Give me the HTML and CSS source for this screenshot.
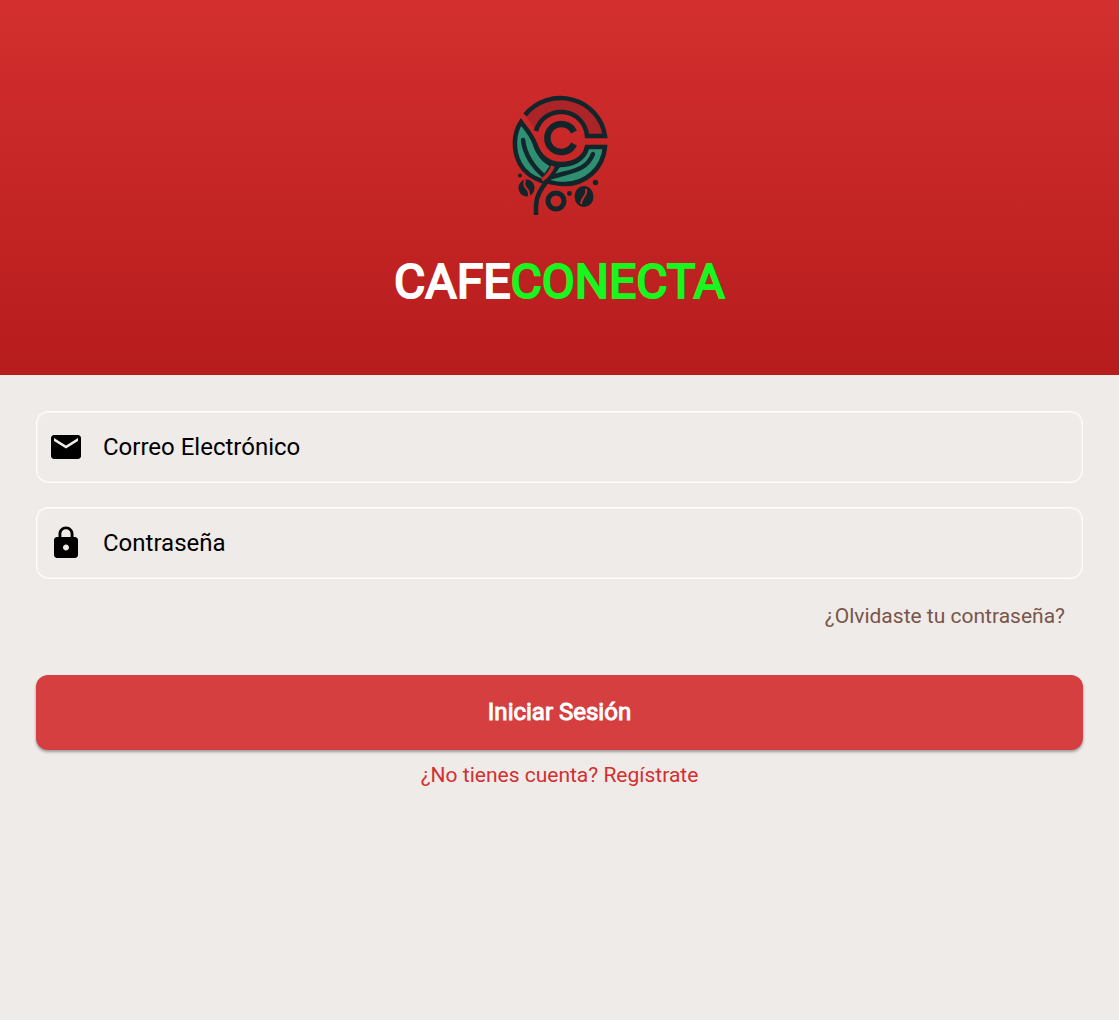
FILE: index.html
```html
<!DOCTYPE html>
<html lang="es">
<head>
<meta charset="utf-8">
<meta name="viewport" content="width=device-width, initial-scale=1">
<title>CafeConecta</title>
<link rel="stylesheet" href="styles.css">
</head>
<body>
<header class="hero">
  <svg class="logo" viewBox="500 95 120 120" fill="none" stroke="#12252a" stroke-width="4.500" aria-hidden="true">
    <path d="M525 115A45 44 0 0 1 605 136H587A26 26 0 0 0 536 131Z" fill="#ab2427" stroke="none"/>
    <path d="M525 115A45 44 0 0 1 605 136H587A26 26 0 0 0 536 131"/>
    <path d="M574 132A14 14 0 1 0 574 144" stroke-width="6.500"/>
    <path d="M521 122C513 134 513 151 520 164C525 173 533 178 542 181L553 165C543 161 539 154 535 144C532 135 526 129 521 122Z" fill="#2f8f72"/>
    <path d="M523 140C525 156 533 167 545 177" stroke-linecap="round"/>
    <path d="M587 147H605C603 169 585 184 565 184C558 184 552 183 547 181L556 165C571 166 585 160 587 147Z" fill="#2f8f72"/>
    <path d="M535 144C539 157 549 164 561 164C575 164 585 157 587 147"/>
    <path d="M593 154C586 172 569 171 552 177" stroke-linecap="round"/>
    <path d="M536 215V206C536 196 541 188 548 180L558 166"/>
    <path d="M542 180C549 175 551 171 553 166" stroke="#c62828" stroke-width="3.500"/>
    <circle cx="556" cy="201" r="8" stroke-width="5"/>
    <g fill="#12252a" stroke="none">
      <ellipse cx="526.500" cy="188" rx="8" ry="8.500"/>
      <ellipse cx="584" cy="196.500" rx="9.500" ry="10.500"/>
      <circle cx="569.500" cy="193.500" r="2.400"/>
      <circle cx="595.500" cy="182.500" r="2.700"/>
      <circle cx="520" cy="175.500" r="2"/>
    </g>
    <path d="M525 180C522 190 530 186 529 196M586 189C588 196 581 197 581 204" stroke="#c62828" stroke-width="2"/>
  </svg>
  <h1 class="brand">CAFE<span class="brand-accent">CONECTA</span></h1>
</header>
<main>
  <form class="login">
    <label class="field">
      <svg class="icon" viewBox="0 0 24 24" aria-hidden="true"><path d="M20 4H4c-1.100 0-1.990.9-1.990 2L2 18c0 1.100.9 2 2 2h16c1.100 0 2-.9 2-2V6c0-1.100-.9-2-2-2zm0 4l-8 5-8-5V6l8 5 8-5v2z"/></svg>
      <input class="field-input" type="email" placeholder="Correo Electrónico" aria-label="Correo Electrónico">
    </label>
    <label class="field">
      <svg class="icon" viewBox="0 0 24 24" aria-hidden="true"><path d="M18 8h-1V6c0-2.760-2.240-5-5-5S7 3.240 7 6v2H6c-1.100 0-2 .9-2 2v10c0 1.100.9 2 2 2h12c1.100 0 2-.9 2-2V10c0-1.100-.9-2-2-2zm-6 9c-1.100 0-2-.9-2-2s.9-2 2-2 2 .9 2 2-.9 2-2 2zm3.100-9H8.900V6c0-1.710 1.390-3.100 3.100-3.100 1.710 0 3.100 1.390 3.100 3.100v2z"/></svg>
      <input class="field-input" type="password" placeholder="Contraseña" aria-label="Contraseña">
    </label>
    <a class="link link-forgot" href="#">¿Olvidaste tu contraseña?</a>
    <button class="submit" type="submit">Iniciar Sesión</button>
    <a class="link link-register" href="#">¿No tienes cuenta? Regístrate</a>
  </form>
</main>
</body>
</html>
```

FILE: styles.css
```css
* {
  box-sizing: border-box;
}

body {
  margin: 0;
  background: #efebe9;
  font-family: Roboto, "Liberation Sans", sans-serif;
}

.hero {
  display: flex;
  flex-direction: column;
  align-items: center;
  gap: 39px;
  padding: 95px 36px 65px;
  background: linear-gradient(#d32f2f, #b71c1c);
}

.logo {
  width: 120px;
  height: 120px;
}

.brand {
  margin: 0;
  color: #fff;
  font-size: 48px;
  font-weight: 400;
  line-height: 56px;
  -webkit-text-stroke: 2px currentColor;
}

.brand-accent {
  color: #19f51e;
}

.login {
  display: flex;
  flex-direction: column;
  padding: 36px;
}

.field {
  display: flex;
  align-items: center;
  gap: 19px;
  height: 72px;
  margin-bottom: 24px;
  padding: 0 11px;
  border: 1px solid #fff;
  border-radius: 12px;
  box-shadow: inset 0 0 0 1px rgba(255, 255, 255, 0.5);
}

.icon {
  flex: none;
  width: 36px;
  height: 36px;
}

.field-input {
  flex: 1;
  min-width: 0;
  padding: 0;
  border: 0;
  outline: 0;
  background: transparent;
  color: #000;
  font: inherit;
  font-size: 24px;
  line-height: 36px;
}

.field-input::placeholder {
  color: #000;
  opacity: 1;
}

.link {
  padding: 12px 18px;
  font-size: 21px;
  line-height: 26px;
  text-decoration: none;
}

.link-forgot {
  align-self: flex-end;
  margin: -12px 0 34px;
  color: #795548;
}

.link-register {
  align-self: center;
  color: #d32f2f;
}

.submit {
  padding: 20px 36px;
  border: 0;
  border-radius: 12px;
  background: #d53f3f;
  box-shadow: 0 2px 3px rgba(0, 0, 0, 0.35);
  color: #fff;
  font: inherit;
  font-size: 24px;
  line-height: 35px;
  -webkit-text-stroke: 1px currentColor;
}
```
